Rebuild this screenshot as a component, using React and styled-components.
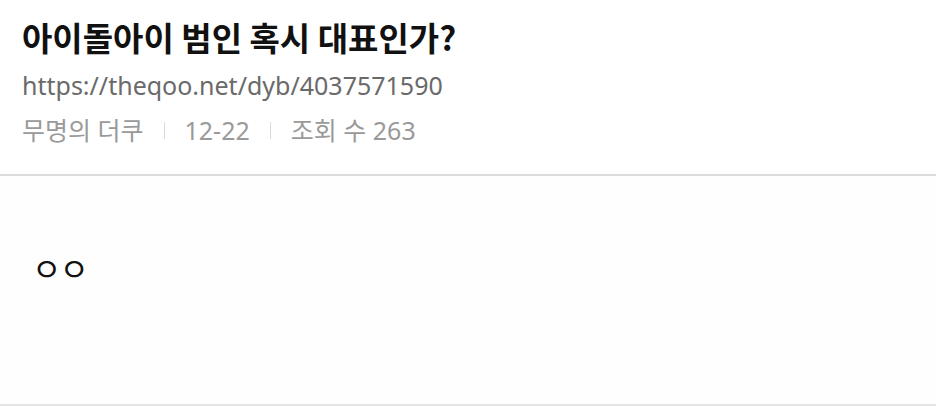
import React from 'react';
import styled, { createGlobalStyle } from 'styled-components';

const GlobalStyle = createGlobalStyle`
  html, body {
    margin: 0;
    padding: 0;
    background: #ffffff;
  }
  body {
    font-family: "Noto Sans", "Noto Sans CJK KR", sans-serif;
  }
`;

const Page = styled.div`
  width: 936px;
  height: 406px;
  display: flex;
  flex-direction: column;
  background: #fff;
  overflow: hidden;
`;

const Header = styled.header`
  padding: 12px 22px 0;
  height: 162px;
  border-bottom: 2px solid #dcdcdc;
  box-sizing: content-box;
`;

const Title = styled.h1`
  margin: 0;
  font-family: "Noto Sans CJK KR", sans-serif;
  font-size: 33px;
  font-weight: 700;
  color: #111;
  line-height: 51px;
`;

const Url = styled.div`
  font-family: "Noto Sans", "Noto Sans CJK KR", sans-serif;
  font-size: 25px;
  color: #6a6a6a;
  line-height: 44px;
`;

const Meta = styled.div`
  display: flex;
  align-items: center;
  font-family: "Noto Sans", "Noto Sans CJK KR", sans-serif;
  font-size: 25px;
  color: #9a9a9a;
  line-height: 46px;
`;

const Sep = styled.span`
  width: 1px;
  height: 17px;
  background: #dadada;
  margin: 0 20px;
`;

const Body = styled.div`
  flex: 1;
  padding: 71px 32px 0;
  border-bottom: 2px solid #e6e6e6;
  background: #fefefe;
`;

const Content = styled.p`
  margin: 0;
  font-family: "Noto Sans CJK KR", sans-serif;
  font-size: 32px;
  letter-spacing: -2px;
  color: #111;
  line-height: 40px;
`;

export default function App() {
  return (
    <Page>
      <GlobalStyle />
      <Header>
        <Title>아이돌아이 범인 혹시 대표인가?</Title>
        <Url>https://theqoo.net/dyb/4037571590</Url>
        <Meta>
          <span>무명의 더쿠</span>
          <Sep />
          <span>12-22</span>
          <Sep />
          <span>조회 수 263</span>
        </Meta>
      </Header>
      <Body>
        <Content>ㅇㅇ</Content>
      </Body>
    </Page>
  );
}
